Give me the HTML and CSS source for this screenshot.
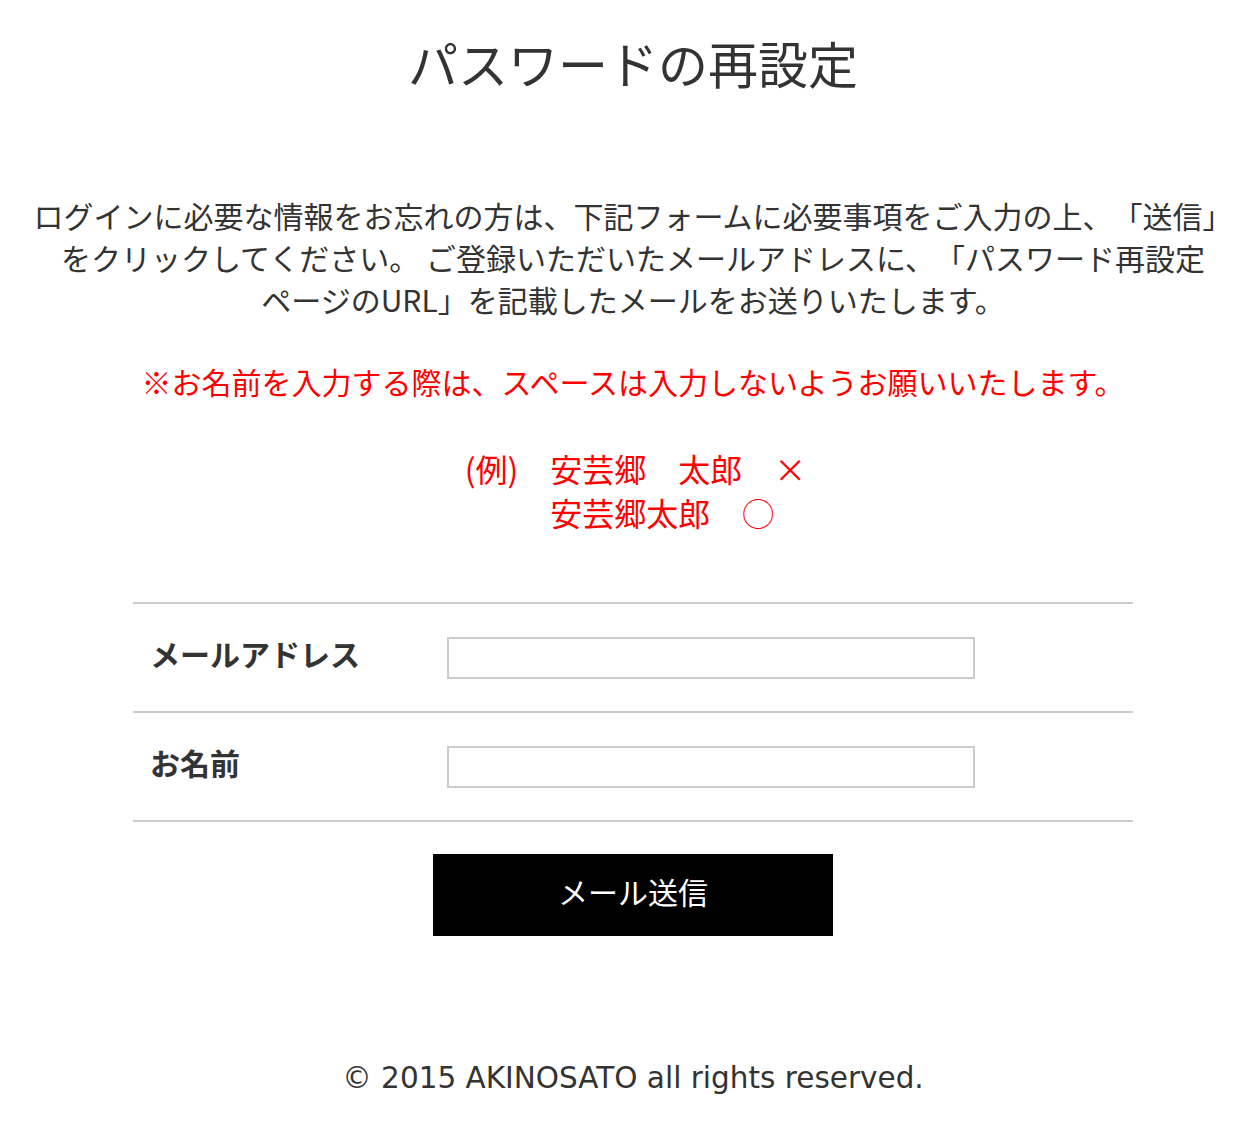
FILE: index.html
```html
<!DOCTYPE html>
<html lang="ja">
<head>
    <meta charset="UTF-8">
    <meta name="viewport" content="width=device-width, initial-scale=1.0">
    <title>パスワードの再設定</title>
    <link rel="stylesheet" href="styles.css">
</head>
<body>
    <div class="page">
        <h1>パスワードの再設定</h1>

        <p class="lead">
            ログインに必要な情報をお忘れの方は、下記フォームに必要事項をご入力の上、「送信」<br>をクリックしてください。 ご登録いただいたメールアドレスに、「パスワード再設定<br>ページのURL」を記載したメールをお送りいたします。
        </p>

        <p class="notice">※お名前を入力する際は、スペースは入力しないようお願いいたします。</p>

        <div class="example-wrap">
            <div class="example">
                <span class="ex-label">(例)</span>
                <div class="ex-lines">
                    <div>安芸郷　太郎　<span class="mark">×</span></div>
                    <div>安芸郷太郎　<span class="mark">◯</span></div>
                </div>
            </div>
        </div>

        <form class="reset-form" onsubmit="return false;">
            <div class="form-row">
                <label for="email">メールアドレス</label>
                <input type="email" id="email">
            </div>
            <div class="form-row">
                <label for="name">お名前</label>
                <input type="text" id="name">
            </div>
            <button type="submit" class="btn-send">メール送信</button>
        </form>

        <footer class="footer">© 2015 AKINOSATO all rights reserved.</footer>
    </div>
</body>
</html>
```

FILE: styles.css
```css
* {
    margin: 0;
    padding: 0;
    box-sizing: border-box;
}

body {
    font-family: "Noto Sans CJK JP", "Noto Sans", sans-serif;
    background: #fff;
    color: #333;
    text-spacing-trim: space-all;
}

.page {
    width: 1213px;
    margin: 0 auto;
    padding: 25px 0 0 12px;
    text-align: center;
}

h1 {
    font-size: 50px;
    font-weight: 400;
    line-height: 75px;
    color: #333;
}

.lead {
    margin-top: 94px;
    font-size: 30px;
    line-height: 42px;
}

.notice {
    margin-top: 40px;
    font-size: 30px;
    line-height: 42px;
    color: #f00;
}

.example-wrap {
    margin-top: 44px;
}

.example {
    display: inline-flex;
    padding-left: 5px;
    text-align: left;
    font-size: 32px;
    line-height: 44px;
    color: #f00;
}

.ex-label {
    margin-right: 1em;
}

.mark {
    display: inline-block;
    width: 1em;
    text-align: center;
}

.reset-form {
    width: 1000px;
    margin: 68px auto 0;
    border-top: 2px solid #ccc;
}

.form-row {
    display: flex;
    align-items: center;
    height: 109px;
    border-bottom: 2px solid #ccc;
    text-align: left;
}

.form-row label {
    width: 314px;
    padding: 0 0 9px 17px;
    font-size: 30px;
    font-weight: 700;
    color: #333;
}

.form-row input {
    width: 528px;
    height: 42px;
    border: 2px solid #ccc;
    border-radius: 0;
    background: #fff;
    font-size: 20px;
    padding: 0 10px;
    outline: none;
}

.btn-send {
    display: block;
    width: 400px;
    height: 82px;
    margin: 32px auto 0;
    padding-bottom: 8px;
    background: #000;
    color: #fff;
    border: none;
    font-family: "Noto Sans CJK JP", sans-serif;
    font-size: 30px;
    cursor: pointer;
}

.footer {
    margin-top: 122px;
    font-family: "DejaVu Sans", sans-serif;
    font-size: 29.5px;
    line-height: 40px;
    color: #333;
}
```
